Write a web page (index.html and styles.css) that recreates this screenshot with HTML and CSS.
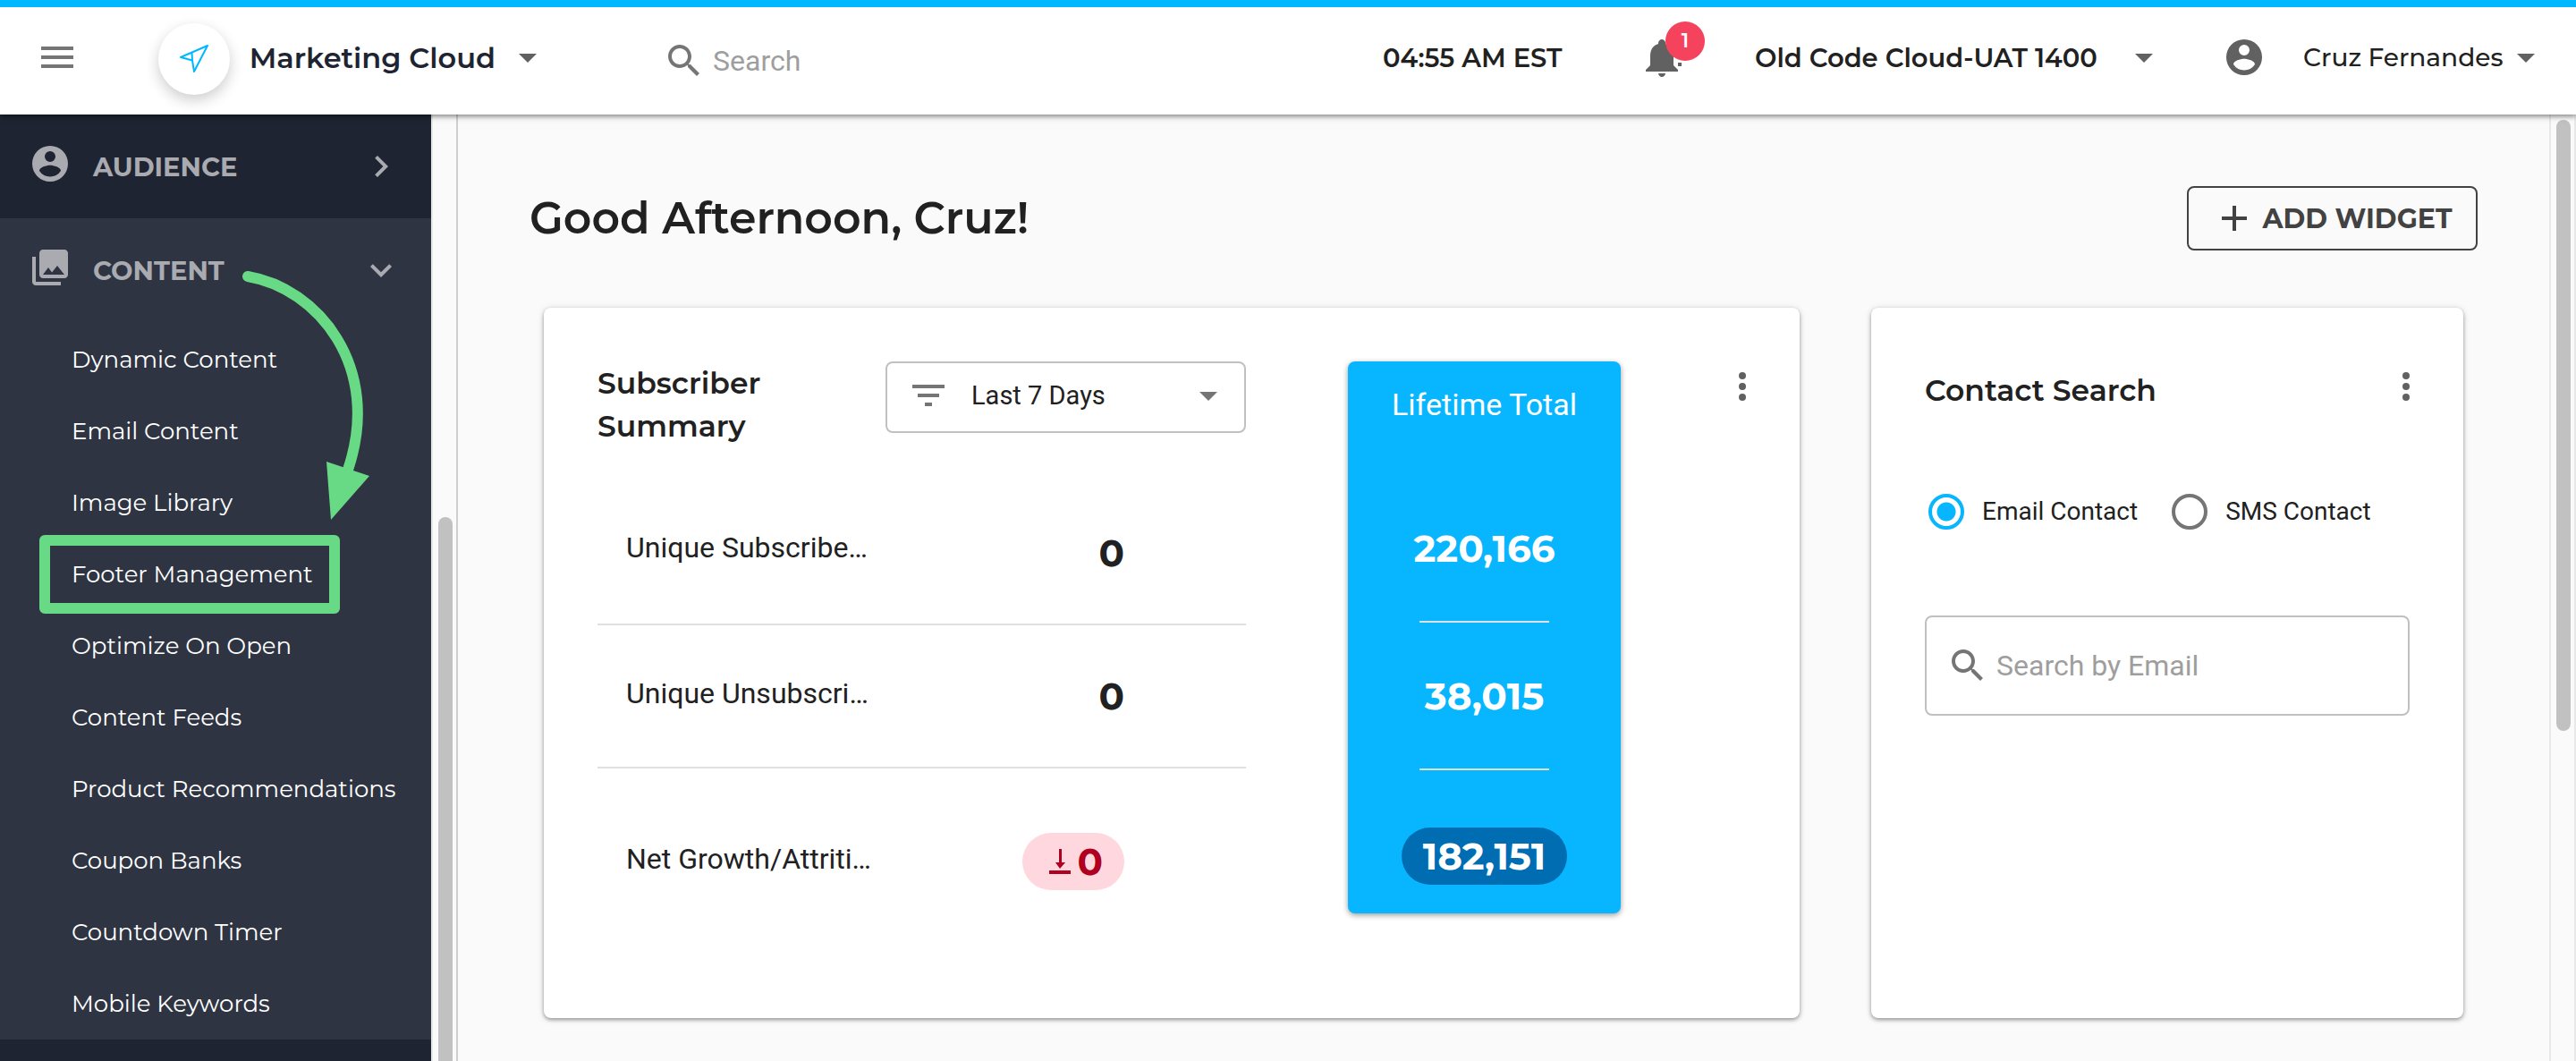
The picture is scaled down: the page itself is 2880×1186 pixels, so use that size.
FILE: index.html
```html
<!DOCTYPE html>
<html lang="en">
<head>
<meta charset="utf-8">
<title>Marketing Cloud</title>
<link rel="stylesheet" href="styles.css">
</head>
<body>
<header class="topbar">
  <button class="icon-button menu-button" aria-label="Menu">
    <svg class="icon" viewBox="0 0 24 24"><path d="M3 18h18v-2H3v2zm0-5h18v-2H3v2zm0-7v2h18V6H3z"/></svg>
  </button>
  <button class="product">
    <span class="product-logo">
      <svg class="plane" viewBox="0 0 32 32"><path d="M31 1 1 14l13 3.500L16 30zM13.500 9l.5 8.500"/></svg>
    </span>
    <span class="product-name">Marketing Cloud</span>
    <svg class="icon caret" viewBox="0 0 24 24"><path d="m7 10 5 5 5-5z"/></svg>
  </button>
  <label class="search">
    <svg class="icon muted" viewBox="0 0 24 24"><path d="M15.500 14h-.79l-.28-.27C15.410 12.590 16 11.110 16 9.500 16 5.910 13.090 3 9.500 3S3 5.910 3 9.500 5.910 16 9.500 16c1.610 0 3.090-.59 4.230-1.570l.27.28v.79l5 4.990L20.490 19l-4.990-5zm-6 0C7.010 14 5 11.990 5 9.500S7.010 5 9.500 5 14 7.010 14 9.500 11.990 14 9.500 14z"/></svg>
    <input class="search-input" type="search" placeholder="Search" aria-label="Search">
  </label>
  <span class="clock">04:55 AM EST</span>
  <button class="icon-button alerts" aria-label="Notifications">
    <svg class="bell" viewBox="0 -4 44 48"><path d="M20 0c2 0 4 2 4 4v1c7 2 9 8 9 14v10l5 5v2H2v-2l5-5V19C7 13 9 7 16 5V4c0-2 2-4 4-4zM16 38h8c0 2-2 4-4 4s-4-2-4-4zM38 26h4v4h-4z"/></svg>
    <span class="badge">1</span>
  </button>
  <button class="account">
    <span class="account-name">Old Code Cloud-UAT 1400</span>
    <svg class="icon caret" viewBox="0 0 24 24"><path d="m7 10 5 5 5-5z"/></svg>
  </button>
  <button class="user">
    <svg class="icon" viewBox="0 0 24 24"><path d="M12 2a10 10 0 1 0 0 20 10 10 0 0 0 0-20zm0 3a3 3 0 1 1 0 6 3 3 0 0 1 0-6zm0 14.200a7.200 7.200 0 0 1-6-3.220c.03-1.990 4-3.080 6-3.080s5.970 1.090 6 3.080a7.200 7.200 0 0 1-6 3.220z"/></svg>
    <span class="user-name">Cruz Fernandes</span>
    <svg class="icon caret" viewBox="0 0 24 24"><path d="m7 10 5 5 5-5z"/></svg>
  </button>
</header>

<div class="shell">
  <nav class="sidebar" aria-label="Main">
    <button class="section-head">
      <svg class="icon section-icon" viewBox="0 0 24 24"><path d="M12 2a10 10 0 1 0 0 20 10 10 0 0 0 0-20zm0 3a3 3 0 1 1 0 6 3 3 0 0 1 0-6zm0 14.200a7.200 7.200 0 0 1-6-3.220c.03-1.990 4-3.080 6-3.080s5.970 1.090 6 3.080a7.200 7.200 0 0 1-6 3.220z"/></svg>
      <span class="section-title">AUDIENCE</span>
      <svg class="icon" viewBox="0 0 24 24"><path d="M10 6 8.590 7.410 13.170 12l-4.580 4.590L10 18l6-6z"/></svg>
    </button>
    <div class="section-open">
      <button class="section-head" aria-expanded="true">
        <svg class="icon section-icon" viewBox="0 0 24 24"><path d="M22 16V4c0-1.100-.9-2-2-2H8c-1.100 0-2 .9-2 2v12c0 1.100.9 2 2 2h12c1.100 0 2-.9 2-2zm-11-4 2.030 2.710L16 11l4 5H8l3-4zM2 6v14c0 1.100.9 2 2 2h14v-2H4V6H2z"/></svg>
        <span class="section-title">CONTENT</span>
        <svg class="icon" viewBox="0 0 24 24"><path d="M16.590 8.590 12 13.170 7.410 8.590 6 10l6 6 6-6z"/></svg>
      </button>
      <ul class="links">
        <li><a class="link" href="#">Dynamic Content</a></li>
        <li><a class="link" href="#">Email Content</a></li>
        <li><a class="link" href="#">Image Library</a></li>
        <li><a class="link highlighted" href="#">Footer Management</a></li>
        <li><a class="link" href="#">Optimize On Open</a></li>
        <li><a class="link" href="#">Content Feeds</a></li>
        <li><a class="link" href="#">Product Recommendations</a></li>
        <li><a class="link" href="#">Coupon Banks</a></li>
        <li><a class="link" href="#">Countdown Timer</a></li>
        <li><a class="link" href="#">Mobile Keywords</a></li>
      </ul>
      <svg class="pointer" viewBox="0 0 160 290" aria-hidden="true">
        <path class="pointer-line" d="M17 19C95 32 168 120 129 235"/>
        <path class="pointer-head" d="M105 226l48 16-43 49z"/>
      </svg>
    </div>
  </nav>
  <div class="rail rail-left"><div class="thumb thumb-left"></div></div>

  <main class="main">
    <div class="page-head">
      <h1 class="greeting">Good Afternoon, Cruz!</h1>
      <button class="add">
        <svg class="icon" viewBox="0 0 24 24"><path d="M19 13h-6v6h-2v-6H5v-2h6V5h2v6h6v2z"/></svg>
        <span>ADD WIDGET</span>
      </button>
    </div>

    <div class="widgets">
      <section class="card summary">
        <div class="period">
          <div class="period-head">
            <h2 class="card-title">Subscriber<br>Summary</h2>
            <div class="picker">
              <svg class="icon muted" viewBox="0 0 24 24"><path d="M10 18h4v-2h-4v2zM3 6v2h18V6H3zm3 7h12v-2H6v2z"/></svg>
              <select class="picker-select" aria-label="Date range"><option>Last 7 Days</option></select>
              <svg class="icon muted" viewBox="0 0 24 24"><path d="m7 10 5 5 5-5z"/></svg>
            </div>
          </div>
          <table class="stats">
            <tr class="gained"><th scope="row">Unique Subscribe…</th><td>0</td></tr>
            <tr><th scope="row">Unique Unsubscri…</th><td>0</td></tr>
            <tr class="net"><th scope="row">Net Growth/Attriti…</th><td>
              <span class="pill-down"><svg class="down" viewBox="0 0 24 28"><path d="M11 0h3v15h4l-6 7-5-7h4zM0 24h24v4H0z"/></svg>0</span>
            </td></tr>
          </table>
        </div>
        <div class="lifetime">
          <h3 class="lifetime-title">Lifetime Total</h3>
          <span class="total first">220,166</span>
          <span class="total">38,015</span>
          <span class="total last"><span class="pill-total">182,151</span></span>
        </div>
        <button class="icon-button" aria-label="Subscriber Summary options">
          <svg class="icon" viewBox="0 0 24 24"><path d="M12 8a2 2 0 1 0 0-4 2 2 0 0 0 0 4zm0 2a2 2 0 1 0 0 4 2 2 0 0 0 0-4zm0 6a2 2 0 1 0 0 4 2 2 0 0 0 0-4z"/></svg>
        </button>
      </section>

      <section class="card contact">
        <div class="contact-head">
          <h2 class="card-title">Contact Search</h2>
          <button class="icon-button" aria-label="Contact Search options">
            <svg class="icon" viewBox="0 0 24 24"><path d="M12 8a2 2 0 1 0 0-4 2 2 0 0 0 0 4zm0 2a2 2 0 1 0 0 4 2 2 0 0 0 0-4zm0 6a2 2 0 1 0 0 4 2 2 0 0 0 0-4z"/></svg>
          </button>
        </div>
        <div class="choices">
          <label class="choice"><input class="radio" type="radio" name="channel" checked>Email Contact</label>
          <label class="choice"><input class="radio" type="radio" name="channel">SMS Contact</label>
        </div>
        <label class="email-box">
          <svg class="icon muted" viewBox="0 0 24 24"><path d="M15.500 14h-.79l-.28-.27C15.410 12.590 16 11.110 16 9.500 16 5.910 13.090 3 9.500 3S3 5.910 3 9.500 5.910 16 9.500 16c1.610 0 3.090-.59 4.230-1.570l.27.28v.79l5 4.990L20.490 19l-4.990-5zm-6 0C7.010 14 5 11.990 5 9.500S7.010 5 9.500 5 14 7.010 14 9.500 11.990 14 9.500 14z"/></svg>
          <input class="search-input" type="email" placeholder="Search by Email" aria-label="Search by Email">
        </label>
      </section>
    </div>
  </main>
  <div class="rail rail-right"><div class="thumb thumb-right"></div></div>
</div>
</body>
</html>
```

FILE: styles.css
```css
* { box-sizing: border-box; }

body {
  margin: 0;
  min-height: 100vh;
  display: flex;
  flex-direction: column;
  background: #fafafa;
  color: #212121;
  font-family: Roboto, "Liberation Sans", sans-serif;
  font-size: 28px;
}

h1, h2, h3 { margin: 0; }

button {
  padding: 0;
  border: 0;
  background: none;
  color: inherit;
  font-family: Montserrat, Inter, sans-serif;
  font-size: 29px;
  font-weight: 600;
  display: flex;
  align-items: center;
  cursor: pointer;
}

input, select {
  border: 0;
  padding: 0;
  background: none;
  color: inherit;
  font-family: inherit;
  outline: none;
}

.icon {
  width: 48px;
  height: 48px;
  flex: none;
  fill: currentColor;
}
.muted { color: #757575; }
.caret { color: #616161; }
.icon-button { color: #616161; flex: none; }

/* Top bar */
.topbar {
  position: relative;
  z-index: 2;
  display: flex;
  align-items: center;
  height: 128px;
  padding: 0 32px 8px 40px;
  border-top: 8px solid #00b8ff;
  background: #fff;
  box-shadow: 0 2px 6px rgba(0, 0, 0, .5);
}
.menu-button { color: #757575; }
.product {
  margin-left: 89px;
  width: 437px;
  flex: none;
  color: #1e2432;
}
.product-logo {
  width: 80px;
  height: 80px;
  margin: 4px 22px 0 0;
  border-radius: 50%;
  display: grid;
  place-items: center;
  background: #fff;
  box-shadow: 0 6px 16px rgba(0, 0, 0, .2);
}
.plane {
  width: 32px;
  height: 32px;
  fill: none;
  stroke: #00b8ff;
  stroke-width: 2;
  stroke-linejoin: round;
}
.product-name { width: 288px; text-align: left; font-size: 32px; }
.search {
  flex: 1;
  min-width: 0;
  margin: 8px 0 0 127px;
  display: flex;
  align-items: center;
  gap: 8px;
}
.search-input {
  flex: 1;
  min-width: 0;
  font-size: 32px;
  line-height: 40px;
}
.search-input::placeholder { color: #9e9e9e; opacity: 1; }
.clock {
  width: 292px;
  font-family: Montserrat, Inter, sans-serif;
  font-size: 29px;
  font-weight: 600;
}
.alerts { position: relative; }
.bell { width: 44px; height: 48px; fill: currentColor; }
.badge {
  position: absolute;
  left: 24px;
  top: -16px;
  width: 44px;
  height: 44px;
  border-radius: 50%;
  background: #f5425d;
  color: #fff;
  font-size: 22px;
  line-height: 44px;
  text-align: center;
}
.account { margin-left: 80px; }
.account-name { width: 411px; text-align: left; }
.user { margin-left: 64px; color: #616161; }
.user-name {
  width: 225px;
  margin-left: 42px;
  text-align: left;
  color: #212121;
  font-size: 28px;
  font-weight: 500;
}

/* Page frame */
.shell { flex: 1; display: flex; }
.sidebar {
  width: 482px;
  flex: none;
  background: #1e2432;
}
.section-head {
  width: 100%;
  height: 116px;
  padding: 0 32px;
  gap: 24px;
  color: #a9abb1;
  font-weight: 700;
}
.section-icon { margin-bottom: 6px; }
.section-title { flex: 1; text-align: left; }
.section-open { position: relative; background: #2e3442; }
.links {
  margin: 0;
  padding: 2px 20px 0 44px;
  list-style: none;
}
.link {
  display: block;
  width: fit-content;
  margin-bottom: -8px;
  padding: 0 18px 0 24px;
  border: 12px solid transparent;
  border-radius: 6px;
  color: #fff;
  font-family: Montserrat, Inter, sans-serif;
  font-size: 26px;
  line-height: 64px;
  text-decoration: none;
  white-space: nowrap;
}
.links { margin-top: -4px; padding-bottom: 4px; }
.links li { height: 80px; }
.highlighted { border-color: #68d984; }
.pointer {
  position: absolute;
  left: 260px;
  top: 46px;
  width: 160px;
  height: 290px;
  overflow: visible;
}
.pointer-line {
  fill: none;
  stroke: #68d984;
  stroke-width: 12;
  stroke-linecap: round;
}
.pointer-head { fill: #68d984; }

.rail {
  flex: none;
  width: 30px;
  padding: 6px 4px 0 6px;
  border-left: 2px solid #e8e8e8;
  border-right: 2px solid #e8e8e8;
  display: flex;
  flex-direction: column;
}
.rail-left { border-right-color: #cfcfcf; }
.thumb { width: 16px; background: #c1c1c1; border-radius: 8px; }
.thumb-left { flex: 1; margin-top: 444px; border-radius: 8px 8px 0 0; }
.thumb-right { height: 683px; }

.main { flex: 1; min-width: 0; padding: 80px 80px 48px; }
.page-head {
  display: flex;
  align-items: center;
  justify-content: space-between;
}
.greeting {
  font-family: Montserrat, Inter, sans-serif;
  font-size: 49px;
  font-weight: 600;
  line-height: 72px;
}
.add {
  min-width: 325px;
  height: 72px;
  padding: 0 24px;
  gap: 8px;
  justify-content: center;
  border: 2px solid #424242;
  border-radius: 8px;
  color: #424242;
  font-size: 30px;
  font-weight: 700;
}

/* Widgets */
.widgets {
  display: grid;
  grid-template-columns: repeat(3, minmax(0, 1fr));
  gap: 80px;
  margin-top: 64px;
  padding: 0 16px;
}
.card {
  padding: 60px;
  border-radius: 8px;
  background: #fff;
  box-shadow: 0 2px 4px rgba(0, 0, 0, .35), 0 1px 8px rgba(0, 0, 0, .12);
}
.card-title {
  font-family: Montserrat, Inter, sans-serif;
  font-size: 33px;
  font-weight: 600;
  line-height: 48px;
}
.summary {
  grid-column: span 2;
  display: grid;
  grid-template-columns: minmax(0, 1fr) 305px 48px;
  align-items: start;
  gap: 112px;
  padding: 60px 40px 72px 60px;
}
.summary .icon-button { margin-top: 4px; }
.period { margin-right: 2px; }
.period-head {
  display: flex;
  justify-content: space-between;
  align-items: flex-start;
}
.picker {
  width: 403px;
  height: 80px;
  padding: 0 16px 4px 22px;
  border: 2px solid #c0c0c0;
  border-radius: 8px;
  display: flex;
  align-items: center;
}
.picker-select {
  flex: 1;
  min-width: 0;
  margin-left: 24px;
  appearance: none;
  font-size: 29px;
  line-height: 40px;
}
.stats {
  width: 100%;
  margin-top: 38px;
  border-collapse: collapse;
}
.stats tr { height: 160px; border-bottom: 2px solid #e0e0e0; }
.stats .net { height: 208px; border-bottom: 0; }
.stats th {
  padding: 0 0 6px 32px;
  font-size: 32px;
  font-weight: 400;
  text-align: left;
  white-space: nowrap;
}
.stats .gained th { padding-bottom: 12px; }
.stats td {
  padding: 0 136px 0 0;
  font-family: Montserrat, Inter, sans-serif;
  font-size: 42px;
  font-weight: 700;
  text-align: right;
}
.pill-down {
  display: inline-flex;
  align-items: center;
  gap: 7px;
  height: 64px;
  padding: 0 24px 0 30px;
  border-radius: 32px;
  background: #ffd7df;
  color: #b00020;
}
.down { width: 24px; height: 28px; fill: currentColor; }

.lifetime {
  display: flex;
  flex-direction: column;
  align-items: center;
  padding-bottom: 32px;
  border-radius: 8px;
  background: #08b6ff;
  color: #fff;
  box-shadow: 0 2px 6px rgba(0, 0, 0, .4);
}
.lifetime-title {
  padding: 24px 0;
  font-size: 34px;
  font-weight: 400;
  line-height: 48px;
}
.total {
  width: 145px;
  height: 165px;
  border-bottom: 2px solid #e0e0e0;
  display: flex;
  align-items: center;
  justify-content: center;
  font-family: Montserrat, Inter, sans-serif;
  font-size: 42px;
  font-weight: 700;
}
.first { height: 196px; padding-top: 32px; }
.last { height: 128px; padding-top: 64px; border-bottom: 0; }
.pill-total {
  flex: none;
  width: 185px;
  height: 64px;
  border-radius: 32px;
  background: #006db3;
  line-height: 64px;
  text-align: center;
}

.contact-head {
  display: flex;
  align-items: flex-start;
  justify-content: space-between;
  margin: 4px -20px 0 0;
}
.contact-head .card-title { padding-top: 4px; }
.choices {
  display: flex;
  gap: 38px;
  margin-top: 92px;
  padding-left: 4px;
}
.choice {
  display: flex;
  align-items: center;
  gap: 20px;
  line-height: 40px;
}
.radio {
  appearance: none;
  width: 40px;
  height: 40px;
  margin: 0;
  border: 4px solid #757575;
  border-radius: 50%;
}
.radio:checked {
  border-color: #08b6ff;
  background: radial-gradient(circle, #08b6ff 10px, transparent 11px);
}
.email-box {
  height: 112px;
  margin-top: 96px;
  padding: 0 24px 0 22px;
  border: 2px solid #c0c0c0;
  border-radius: 8px;
  display: flex;
  align-items: center;
  gap: 8px;
}
```
